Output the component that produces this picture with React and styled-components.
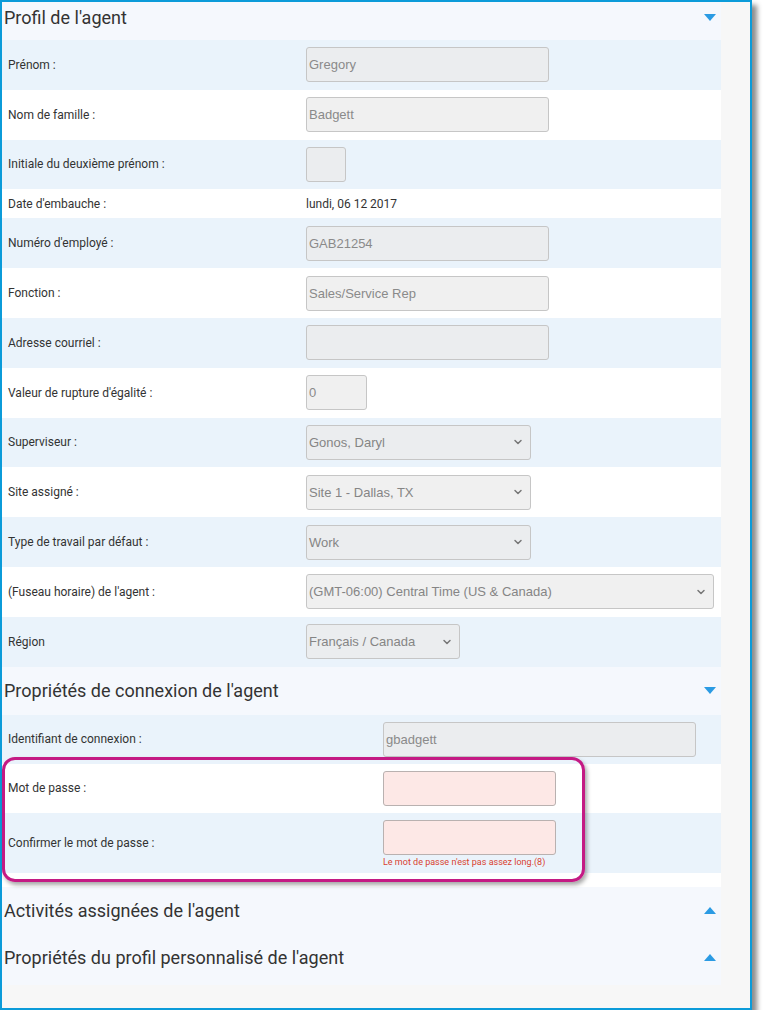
import styled, { createGlobalStyle } from "styled-components";
import { ChevronDown } from "lucide-react";

const GlobalStyle = createGlobalStyle`
  html, body {
    margin: 0;
    padding: 0;
    background: #ffffff;
    font-family: Roboto, "Noto Sans", Arial, sans-serif;
  }
`;

const Frame = styled.div`
  position: relative;
  box-sizing: border-box;
  width: 752px;
  height: 1010px;
  border: 2px solid #0b9bd9;
  background: #f7f7f7;
  box-shadow: 5px 5px 5px rgba(0, 0, 0, 0.45);
  display: flex;
  flex-direction: column;
  align-items: flex-start;
`;

const Panel = styled.div`
  width: 719px;
  background: #f5f8fd;
  padding-bottom: 4px;
`;

const SectionHeader = styled.div`
  display: flex;
  align-items: center;
  justify-content: space-between;
  height: ${(p) => p.$h || 47}px;
  padding: 0 5px ${(p) => p.$lift || 0}px 2px;
  font-size: 18px;
  color: #333;
  box-sizing: border-box;
`;

const Caret = styled.span`
  width: 0;
  height: 0;
  border-left: 6px solid transparent;
  border-right: 6px solid transparent;
  ${(p) =>
    p.$up
      ? "border-bottom: 7px solid #2b9be3;"
      : "border-top: 7px solid #2b9be3;"}
`;

const Row = styled.div`
  display: grid;
  grid-template-columns: ${(p) => p.$label}px 1fr;
  align-items: center;
  height: ${(p) => p.$h || 49.8}px;
  padding-left: 6px;
  box-sizing: border-box;
  background: ${(p) => (p.$blue ? "#eaf3fb" : "#ffffff")};
`;

const Spacer = styled.div`
  height: 14px;
  background: #ffffff;
`;

const Label = styled.div`
  font-size: 12px;
  color: #333;
`;

const Value = styled.div`
  font-size: 12px;
  color: #333;
`;

const Input = styled.div`
  box-sizing: border-box;
  width: ${(p) => p.$w}px;
  height: 35px;
  border: 1px solid #c6c6c6;
  border-radius: 3px;
  background: ${(p) => (p.$error ? "#fde8e6" : "rgba(235, 235, 235, 0.75)")};
  border-color: ${(p) => (p.$error ? "#b9b1b0" : "#c6c6c6")};
  display: flex;
  align-items: center;
  padding-left: 2px;
  font-family: "Liberation Sans", Arial, sans-serif;
  font-size: 13px;
  color: #8a8a8a;
`;

const Select = styled(Input)`
  justify-content: space-between;
  padding-right: 6px;
  color: #858585;
`;

const Stack = styled.div`
  display: flex;
  flex-direction: column;
  align-items: flex-start;
  padding-top: 2px;
`;

const ErrorText = styled.div`
  margin-top: 2px;
  font-size: 9px;
  color: #d9412f;
`;

const Highlight = styled.div`
  position: absolute;
  left: 0;
  top: 755px;
  width: 583px;
  height: 125px;
  box-sizing: border-box;
  border: 3px solid #c41a84;
  border-radius: 13px;
  box-shadow: 2px 3px 4px rgba(0, 0, 0, 0.35);
  pointer-events: none;
`;

const profileFields = [
  { label: "Prénom :", input: "Gregory", w: 243 },
  { label: "Nom de famille :", input: "Badgett", w: 243 },
  { label: "Initiale du deuxième prénom :", input: "", w: 40 },
  { label: "Date d'embauche :", text: "lundi, 06 12 2017", h: 29 },
  { label: "Numéro d'employé :", input: "GAB21254", w: 243 },
  { label: "Fonction :", input: "Sales/Service Rep", w: 243 },
  { label: "Adresse courriel :", input: "", w: 243 },
  { label: "Valeur de rupture d'égalité :", input: "0", w: 61 },
  { label: "Superviseur :", select: "Gonos, Daryl", w: 225 },
  { label: "Site assigné :", select: "Site 1 - Dallas, TX", w: 225 },
  { label: "Type de travail par défaut :", select: "Work", w: 225 },
  {
    label: "(Fuseau horaire) de l'agent :",
    select: "(GMT-06:00) Central Time (US & Canada)",
    w: 408,
  },
  { label: "Région", select: "Français / Canada", w: 154 },
];

function Field({ f }) {
  if (f.text) return <Value>{f.text}</Value>;
  if (f.select)
    return (
      <Select $w={f.w}>
        <span>{f.select}</span>
        <ChevronDown size={12} strokeWidth={3} color="#777" />
      </Select>
    );
  return <Input $w={f.w}>{f.input}</Input>;
}

export default function App() {
  return (
    <>
      <GlobalStyle />
      <Frame>
        <Panel>
          <SectionHeader $h={38} $lift={8}>
            <span>Profil de l'agent</span>
            <Caret />
          </SectionHeader>
          {profileFields.map((f, i) => (
            <Row key={f.label} $label={298} $blue={i % 2 === 0} $h={f.h}>
              <Label>{f.label}</Label>
              <Field f={f} />
            </Row>
          ))}

          <SectionHeader $h={48}>
            <span>Propriétés de connexion de l'agent</span>
            <Caret />
          </SectionHeader>
          <Row $label={375} $blue $h={49}>
            <Label>Identifiant de connexion :</Label>
            <Input $w={313}>gbadgett</Input>
          </Row>
          <Row $label={375} $h={49}>
            <Label>Mot de passe :</Label>
            <Input $w={173} $error />
          </Row>
          <Row $label={375} $blue $h={60}>
            <Label>Confirmer le mot de passe :</Label>
            <Stack>
              <Input $w={173} $error />
              <ErrorText>Le mot de passe n'est pas assez long.(8)</ErrorText>
            </Stack>
          </Row>
          <Spacer />

          <SectionHeader>
            <span>Activités assignées de l'agent</span>
            <Caret $up />
          </SectionHeader>
          <SectionHeader>
            <span>Propriétés du profil personnalisé de l'agent</span>
            <Caret $up />
          </SectionHeader>
        </Panel>
        <Highlight />
      </Frame>
    </>
  );
}
